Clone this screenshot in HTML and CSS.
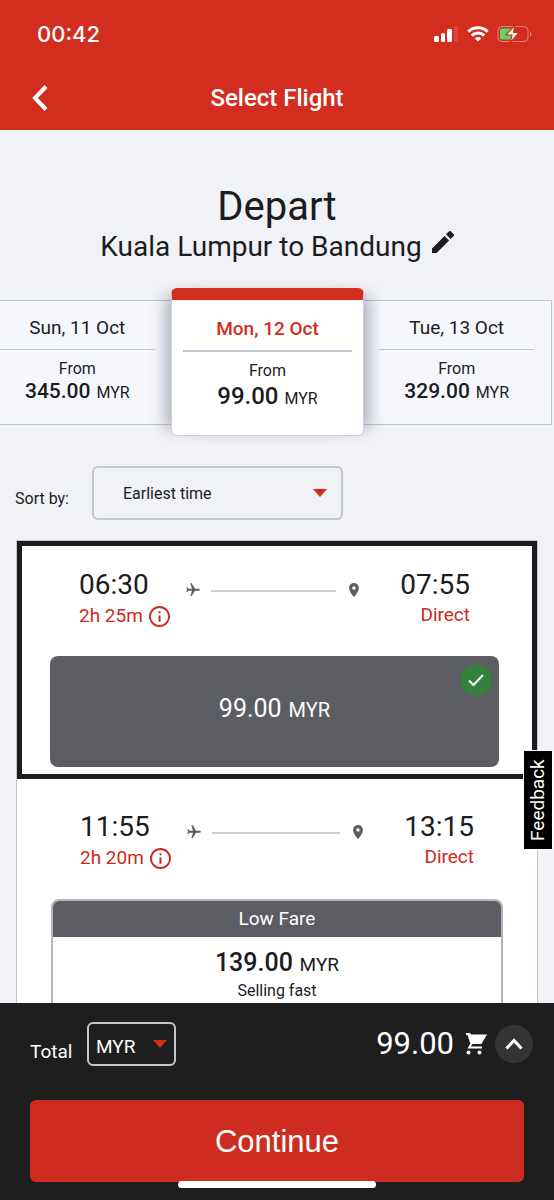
FILE: index.html
```html
<!DOCTYPE html>
<html lang="en">
<head>
<meta charset="utf-8">
<meta name="viewport" content="width=device-width, initial-scale=1">
<title>Select Flight</title>
<link rel="stylesheet" href="styles.css">
</head>
<body>
<svg class="defs" aria-hidden="true">
  <symbol id="plane" viewBox="0 0 24 24"><path d="M21 16v-2l-8-5V3.500c0-.83-.67-1.500-1.500-1.500S10 2.670 10 3.500V9l-8 5v2l8-2.500V19l-2 1.500V22l3.500-1 3.500 1v-1.500L13 19v-5.500l8 2.500z" transform="rotate(90 12 12)"/></symbol>
  <symbol id="pin" viewBox="5 2 14 20"><path d="M12 2C8.130 2 5 5.130 5 9c0 5.250 7 13 7 13s7-7.750 7-13c0-3.870-3.130-7-7-7zm0 9.500a2.500 2.500 0 1 1 0-5 2.500 2.500 0 0 1 0 5z"/></symbol>
  <symbol id="info" viewBox="2 2 20 20"><path d="M11 17h2v-6h-2v6zm1-15C6.480 2 2 6.480 2 12s4.480 10 10 10 10-4.480 10-10S17.520 2 12 2zm0 18.200a8.200 8.200 0 1 1 0-16.400 8.200 8.200 0 0 1 0 16.400zM11 9h2V7h-2v2z"/></symbol>
  <symbol id="caret" viewBox="0 0 14 8"><path d="M0 0h14L7 8z"/></symbol>
</svg>
<div class="screen">
  <header class="top">
    <div class="status">
      <span class="clock">00:42</span>
      <svg class="status-icons" viewBox="0 0 98 20" aria-hidden="true">
        <g fill="#fff">
          <rect x="0" y="12" width="5" height="6" rx="1.500"/>
          <rect x="7" y="9" width="4" height="9" rx="1.500"/>
          <rect x="13" y="5" width="5" height="13" rx="1.500"/>
          <rect x="20" y="2" width="4" height="16" rx="1.500" opacity=".12"/>
          <path d="M44 17.500l-3.300-3a5 5 0 0 1 6.600 0z"/>
        </g>
        <g fill="none" stroke="#fff" stroke-width="3">
          <path d="M34.300 7.600a14 14 0 0 1 19.400 0"/>
          <path d="M37.800 11.600a9 9 0 0 1 12.400 0"/>
        </g>
        <rect x="64" y="2.500" width="30" height="15" rx="4" fill="none" stroke="#fff" stroke-opacity=".4"/>
        <path d="M96 7.500v5c2-1 2-4 0-5z" fill="#fff" opacity=".4"/>
        <rect x="66" y="4.500" width="12" height="11" rx="2" fill="#60d667"/>
        <path d="M81 1l-9 10h6l-2 8 9-10.500h-5.500z" fill="#fff" stroke="#d32d20" stroke-width="1.200"/>
      </svg>
    </div>
    <div class="title-bar">
      <button class="back" aria-label="Back"><svg viewBox="0 0 16 26"><path d="M14 1.500L3 13l11 11.500"/></svg></button>
      <h1 class="title">Select Flight</h1>
    </div>
  </header>

  <main class="content">
    <section class="route">
      <h2 class="direction">Depart</h2>
      <p class="cities">Kuala Lumpur to Bandung
        <button class="edit" aria-label="Edit route"><svg viewBox="3 3 18 18"><path d="M3 17.250V21h3.750L17 10.750 13.250 7 3 17.250zM20.700 7.040a1 1 0 0 0 0-1.410l-2.340-2.340a1 1 0 0 0-1.410 0L14.500 5.750l3.750 3.750 2.450-2.460z"/></svg></button>
      </p>
    </section>

    <nav class="dates" aria-label="Departure date">
      <button class="date">
        <span class="day">Sun, 11 Oct</span>
        <span class="from">From</span>
        <span class="price"><b>345.00</b> MYR</span>
      </button>
      <button class="date date-active" aria-current="date">
        <span class="day">Mon, 12 Oct</span>
        <span class="from">From</span>
        <span class="price"><b>99.00</b> MYR</span>
      </button>
      <button class="date">
        <span class="day">Tue, 13 Oct</span>
        <span class="from">From</span>
        <span class="price"><b>329.00</b> MYR</span>
      </button>
    </nav>

    <div class="sort">
      <label class="sort-label" for="sort">Sort by:</label>
      <div class="select-wrap sort-wrap">
        <select id="sort" class="select sort-select"><option>Earliest time</option></select>
        <svg class="caret sort-caret" aria-hidden="true"><use href="#caret"/></svg>
      </div>
    </div>

    <section class="flights">
      <article class="flight flight-selected">
        <div class="leg">
          <div class="leave">
            <span class="time">06:30</span>
            <span class="note">2h 25m <svg class="info"><use href="#info"/></svg></span>
          </div>
          <div class="track">
            <svg class="plane"><use href="#plane"/></svg>
            <span class="line"></span>
            <svg class="pin"><use href="#pin"/></svg>
          </div>
          <div class="arrive">
            <span class="time">07:55</span>
            <span class="note">Direct</span>
          </div>
        </div>
        <button class="fare-selected" aria-pressed="true">
          <span class="amount">99.00</span> MYR
          <svg class="tick" viewBox="0 0 32 32" aria-hidden="true"><circle cx="16" cy="16" r="16"/><path d="M9 16.500l4.500 4.500L23 11"/></svg>
        </button>
      </article>

      <article class="flight">
        <div class="leg">
          <div class="leave">
            <span class="time">11:55</span>
            <span class="note">2h 20m <svg class="info"><use href="#info"/></svg></span>
          </div>
          <div class="track">
            <svg class="plane"><use href="#plane"/></svg>
            <span class="line"></span>
            <svg class="pin"><use href="#pin"/></svg>
          </div>
          <div class="arrive">
            <span class="time">13:15</span>
            <span class="note">Direct</span>
          </div>
        </div>
        <button class="fare">
          <span class="fare-name">Low Fare</span>
          <span class="fare-price"><b>139.00</b> MYR</span>
          <span class="fare-hint">Selling fast</span>
        </button>
      </article>
    </section>
  </main>

  <footer class="bottom">
    <div class="total">
      <label class="total-label" for="currency">Total</label>
      <div class="select-wrap">
        <select id="currency" class="select currency-select"><option>MYR</option></select>
        <svg class="caret currency-caret" aria-hidden="true"><use href="#caret"/></svg>
      </div>
      <span class="total-amount">99.00</span>
      <svg class="cart" viewBox="0 0 22 22" aria-hidden="true"><path d="M1 0h4l1 1.500h16L16.500 11H7.500l-1.500 2.500h11v2H2.500l2.800-5L2.500 2H1z"/><circle cx="3.500" cy="19.500" r="2"/><circle cx="14.500" cy="19.500" r="2"/></svg>
      <button class="expand" aria-label="Show price details"><svg viewBox="0 0 18 12"><path d="M1.500 10.500L9 2.500l7.500 8"/></svg></button>
    </div>
    <button class="continue">Continue</button>
    <div class="home-bar"></div>
  </footer>
  <button class="feedback">Feedback</button>
</div>
</body>
</html>
```
FILE: styles.css
```css
* { box-sizing: border-box; }

body {
  margin: 0;
  background: #f1f2f5;
  color: #1c1c1f;
  font-family: Roboto, sans-serif;
  font-size: 16px;
}

h1, h2, p { margin: 0; font-weight: 400; }
b { margin-right: 2px; font-weight: 500; }
svg { display: block; }

button {
  margin: 0;
  padding: 0;
  border: 0;
  background: none;
  color: inherit;
  font: inherit;
}

.defs { position: absolute; width: 0; height: 0; }

.screen {
  position: relative;
  display: flex;
  flex-direction: column;
  height: 100vh;
  overflow: hidden;
}

/* Header */
.top { background: #d32d20; color: #fff; }

.status {
  display: flex;
  align-items: center;
  justify-content: space-between;
  height: 68px;
  padding: 0 22px 0 37px;
}
.clock { font: 500 22px/28px Inter, sans-serif; }
.status-icons { width: 98px; height: 20px; }

.title-bar {
  display: grid;
  grid-template-columns: 48px 1fr 48px;
  align-items: center;
  padding: 13px 16px 15px;
}
.back { display: flex; justify-content: center; }
.back svg { width: 16px; height: 26px; fill: none; stroke: #fff; stroke-width: 4; }
.title { font-size: 24px; line-height: 34px; text-align: center; font-weight: 500; }

/* Route */
.content { flex: 1; min-height: 0; overflow: hidden; }
.route { padding-top: 55px; text-align: center; }
.direction { font-size: 40px; line-height: 44px; }
.cities {
  display: flex;
  justify-content: center;
  gap: 10px;
  font-size: 28px;
  line-height: 36px;
}
.edit { align-self: flex-start; padding-top: 2px; }
.edit svg { width: 22px; height: 22px; fill: #1c1c1f; }

/* Date strip */
.dates {
  display: grid;
  grid-template-columns: repeat(3, 1fr);
  align-items: center;
  margin: 23px 2px 0 -17px;
}
.date {
  display: flex;
  flex-direction: column;
  align-items: center;
  height: 125px;
  padding: 16px 17px 0;
  border: 1px solid #c1c5d2;
  border-left: 0;
  background: #f6f7fc;
}
.day {
  align-self: stretch;
  padding-bottom: 10px;
  border-bottom: 1px solid #c1c5d2;
  font-size: 19px;
  line-height: 22px;
}
.from { margin-top: 9px; line-height: 20px; }
.price { line-height: 24px; }
.price b { font-size: 21px; }

.date-active {
  position: relative;
  height: 148px;
  margin: 0 -2px;
  padding-top: 18px;
  border: 1px solid #cdd0d8;
  border-top: 12px solid #d32d20;
  border-radius: 6px;
  background: #fff;
  box-shadow: 14px 0 14px -8px rgba(70, 75, 95, .4), -14px 0 14px -8px rgba(70, 75, 95, .4);
}
.date-active .day { margin: 0 -6px; color: #d32d20; font-weight: 500; border-width: 2px; }
.date-active .price { line-height: 30px; }
.date-active .price b { font-size: 24px; }

/* Sorting */
.sort { display: flex; align-items: center; margin-top: 30px; padding-left: 15px; }
.sort-label { width: 77px; padding-top: 10px; }

.select-wrap { position: relative; }
.select {
  appearance: none;
  width: 100%;
  margin: 0;
  border: 2px solid #c3c6d0;
  border-radius: 6px;
  background: none;
  color: inherit;
  font: inherit;
}
.caret { position: absolute; width: 14px; height: 8px; fill: #d32d20; pointer-events: none; }
.sort-wrap { width: 251px; }
.sort-select { height: 54px; padding: 0 40px 0 29px; }
.sort-caret { top: 23px; right: 16px; }

/* Flights */
.flights {
  margin: 20px 16px 0;
  border: 1px solid #c1c5d2;
  border-bottom: 0;
  background: #fff;
}
.flight { padding: 31px 34px 0; }
.flight-selected { padding: 22px 33px 7px 28px; border: 5px solid #1c1c1f; }

.leg { display: flex; padding: 0 29px; }
.leave { width: 106px; }
.arrive { width: 111px; text-align: right; }
.time { display: block; font-size: 28px; line-height: 34px; }
.note {
  display: flex;
  align-items: center;
  gap: 6px;
  font-size: 19px;
  line-height: 28px;
  color: #cc2a22;
}
.arrive .note { justify-content: flex-end; line-height: 26px; }
.info { width: 21px; height: 21px; fill: #cc2a22; }
.track { display: flex; flex: 1; align-items: center; height: 44px; }
.plane { width: 16px; height: 16px; fill: #5b5d62; }
.pin { width: 10px; height: 14px; fill: #5b5d62; }
.line { flex: 1; height: 2px; margin: 2px 13px 0 10px; background: #cdced2; }

.fare-selected {
  position: relative;
  width: 100%;
  height: 111px;
  margin-top: 26px;
  padding-bottom: 6px;
  border-radius: 8px;
  background: #5b5d62;
  color: #fff;
  font-size: 20px;
}
.amount { margin-right: 2px; font-size: 25px; }
.tick { position: absolute; top: 8px; right: 7px; width: 32px; height: 32px; fill: #33803f; }
.tick path { fill: none; stroke: #fff; stroke-width: 2; }

.fare {
  display: flex;
  flex-direction: column;
  width: 100%;
  margin-top: 27px;
  padding-bottom: 40px;
  border: 2px solid #b4b6bb;
  border-radius: 8px;
  overflow: hidden;
}
.fare-name { background: #5b5d62; color: #fff; font-size: 19px; line-height: 36px; }
.fare-price { margin-top: 10px; font-size: 19px; line-height: 32px; }
.fare-price b { font-size: 25px; }
.fare-hint { line-height: 20px; }

/* Footer */
.bottom { position: relative; padding: 19px 30px 18px; background: #1e1e1e; color: #fff; }
.total { display: flex; align-items: center; margin-right: -9px; }
.total-label { width: 57px; padding-top: 14px; font-size: 19px; }
.currency-select { width: 89px; height: 44px; padding: 4px 30px 0 7px; font-size: 19px; }
.currency-caret { top: 18px; right: 9px; }
.total-amount { margin-left: auto; font-size: 31px; line-height: 44px; }
.cart { width: 22px; height: 22px; margin: 0 8px 0 11px; fill: #fff; }
.expand {
  display: grid;
  place-items: center;
  width: 38px;
  height: 38px;
  border-radius: 50%;
  background: #333535;
}
.expand svg { width: 18px; height: 12px; fill: none; stroke: #fff; stroke-width: 3; }
.continue {
  display: block;
  width: 100%;
  height: 82px;
  margin-top: 34px;
  padding-top: 2px;
  border-radius: 6px;
  background: #ce2c20;
  font: 31px "Liberation Sans", sans-serif;
}
.home-bar {
  position: absolute;
  bottom: 12px;
  left: 50%;
  width: 198px;
  height: 7px;
  border-radius: 4px;
  background: #fff;
  transform: translateX(-50%);
}

.feedback {
  position: absolute;
  top: 750px;
  right: 1px;
  width: 30px;
  height: 100px;
  border: 1px solid #fff;
  background: #000;
  color: #fff;
  font-size: 19px;
  line-height: 28px;
  writing-mode: vertical-rl;
  transform: rotate(180deg);
}
```
